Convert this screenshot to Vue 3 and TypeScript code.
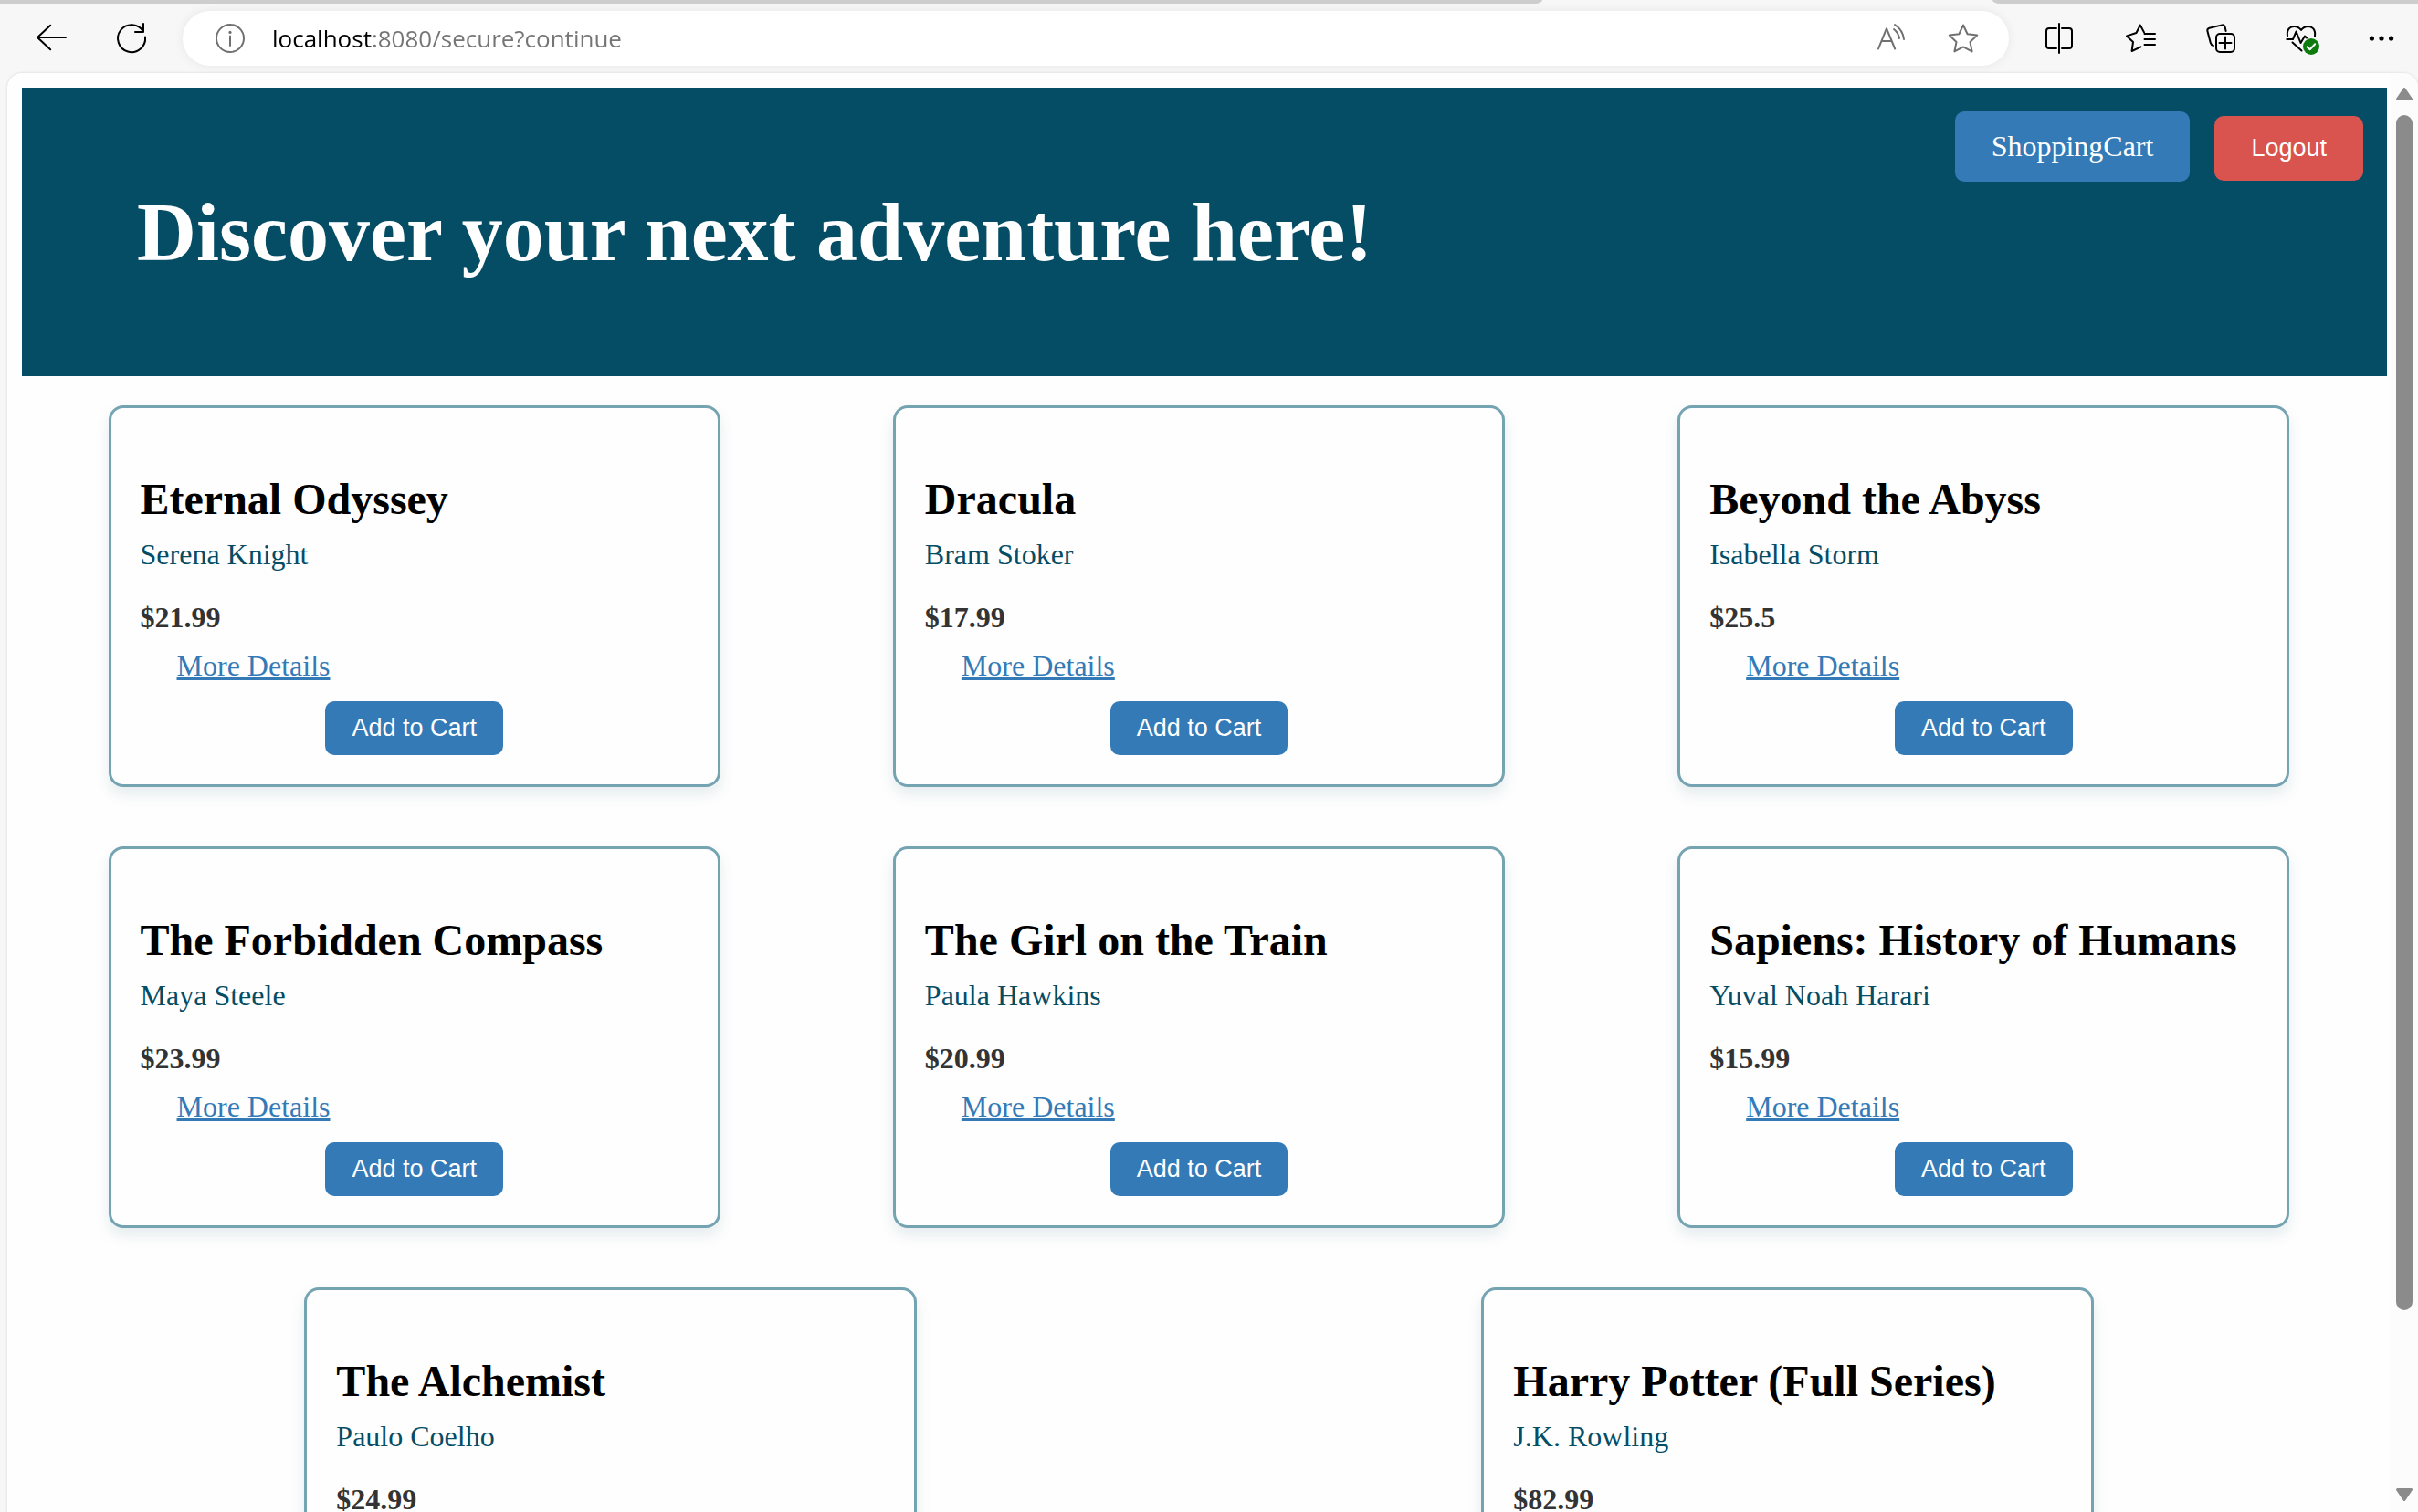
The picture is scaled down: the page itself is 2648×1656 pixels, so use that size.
<script setup lang="ts">
import { ref } from 'vue'

interface Book {
  title: string
  author: string
  price: string
}

const address = ref('localhost:8080/secure?continue')

const books: Book[] = [
  { title: 'Eternal Odyssey', author: 'Serena Knight', price: '$21.99' },
  { title: 'Dracula', author: 'Bram Stoker', price: '$17.99' },
  { title: 'Beyond the Abyss', author: 'Isabella Storm', price: '$25.5' },
  { title: 'The Forbidden Compass', author: 'Maya Steele', price: '$23.99' },
  { title: 'The Girl on the Train', author: 'Paula Hawkins', price: '$20.99' },
  { title: 'Sapiens: History of Humans', author: 'Yuval Noah Harari', price: '$15.99' },
  { title: 'The Alchemist', author: 'Paulo Coelho', price: '$24.99' },
  { title: 'Harry Potter (Full Series)', author: 'J.K. Rowling', price: '$82.99' },
]
</script>

<template>
  <div class="browser">
    <div class="tabs">
      <span class="tab-strip before"></span>
      <span class="tab-strip after"></span>
    </div>

    <div class="toolbar">
      <div class="tools">
        <button class="tool" type="button" aria-label="Back">
          <svg viewBox="0 0 40 40"><path d="M19.2 5.8 5 19 19.2 32.2M5 19H36" /></svg>
        </button>
        <button class="tool" type="button" aria-label="Refresh">
          <svg viewBox="0 0 40 40"><path d="M35 18.5A15 15 0 1 1 33 12.5M33 4V13H24" /></svg>
        </button>
      </div>

      <div class="address">
        <button class="tool muted" type="button" aria-label="Site information">
          <svg viewBox="0 0 40 40">
            <circle cx="20" cy="20" r="15" />
            <path d="M20 17.5V28" />
            <circle class="solid" cx="20" cy="13.4" r="1.6" />
          </svg>
        </button>
        <input v-model="address" class="url" type="text" aria-label="Address" spellcheck="false" />
        <div class="address-tools">
          <button class="tool muted" type="button" aria-label="Read aloud">
            <svg viewBox="0 0 40 40">
              <path d="M5 31.5 14 9.2 23.2 31.5M8.6 23H19.6M22 10Q27 14 28 20M23 5Q32 11 33 21" />
            </svg>
          </button>
          <button class="tool muted" type="button" aria-label="Add to favorites">
            <svg viewBox="0 0 40 40">
              <path d="M20 5.5 24.6 15.2 35.2 16.6 27.5 24 29.6 34.4 20 29.4 10.4 34.4 12.5 24 4.8 16.6 15.4 15.2Z" />
            </svg>
          </button>
        </div>
      </div>

      <div class="tools">
        <button class="tool" type="button" aria-label="Split screen">
          <svg viewBox="0 0 40 40">
            <path d="M19 4V36M16 9H8A3 3 0 0 0 5 12V28A3 3 0 0 0 8 31H16M22 9H30A3 3 0 0 1 33 12V28A3 3 0 0 1 30 31H22" />
          </svg>
        </button>
        <button class="tool" type="button" aria-label="Favorites">
          <svg viewBox="0 0 40 40">
            <path d="M24 13.4 19.8 5.5 15.5 14 5 17.4 12 24 10.6 34 20.5 29.4M24.5 15H36M24.5 21H36M24.5 27H36" />
          </svg>
        </button>
        <button class="tool" type="button" aria-label="Collections">
          <svg viewBox="0 0 40 40">
            <path d="M25.6 12 24.6 7.5Q23.8 5 21.5 5.4L7.5 8.8Q4.8 9.6 5.4 12L8.8 25Q9.5 27.5 12 28" />
            <rect x="15" y="15" width="20" height="20" rx="4" />
            <path d="M25 18.5V31.5M18.5 25H31.5" />
          </svg>
        </button>
        <button class="tool" type="button" aria-label="Browser essentials">
          <svg viewBox="0 0 40 40">
            <path d="M5 17.5C4 10 8 7 12.4 7Q17 7 20 11Q23 7 27.6 7C32 7 36 10 35 17.5" />
            <path d="M4.3 21H11L14.6 12.5 19.5 25 24 17.5 26 19.5M10.5 24.5 20.5 33.5" />
            <circle class="badge" cx="31" cy="29" r="9" />
            <path class="tick" d="M26.6 29.4 29.6 32.2 35.2 26.2" />
          </svg>
        </button>
        <button class="tool" type="button" aria-label="Settings and more">
          <svg viewBox="0 0 40 40">
            <circle class="solid" cx="9.4" cy="20" r="2.6" />
            <circle class="solid" cx="20" cy="20" r="2.6" />
            <circle class="solid" cx="30.6" cy="20" r="2.6" />
          </svg>
        </button>
      </div>
    </div>

    <div class="viewport">
      <div class="page">
        <header class="banner">
          <h1>Discover your next adventure here!</h1>
          <nav class="actions">
            <a class="cart" href="#cart">ShoppingCart</a>
            <button class="logout" type="button">Logout</button>
          </nav>
        </header>

        <main class="books">
          <article v-for="book in books" :key="book.title" class="book">
            <h2>{{ book.title }}</h2>
            <p class="author">{{ book.author }}</p>
            <p class="price">{{ book.price }}</p>
            <a class="details" href="#details">More Details</a>
            <button class="add" type="button">Add to Cart</button>
          </article>
        </main>
      </div>

      <div class="scrollbar">
        <svg class="arrow" viewBox="0 0 18 14"><path d="M9 1.5 16.5 12.5H1.5Z" /></svg>
        <div class="track"><div class="thumb"></div></div>
        <svg class="arrow" viewBox="0 0 18 14"><path d="M9 12.5 16.5 1.5H1.5Z" /></svg>
      </div>
    </div>
  </div>
</template>

<style>
body {
  margin: 0;
  background: #f7f7f7;
}
</style>

<style scoped>
.browser {
  display: flex;
  flex-direction: column;
  height: 100vh;
  overflow: hidden;
  background: #f7f7f7;
  font-family: "Liberation Serif", "Times New Roman", serif;
}

button {
  border: 0;
  font-family: "Liberation Sans", Arial, sans-serif;
  cursor: pointer;
}

.tabs {
  display: flex;
  flex: none;
  justify-content: space-between;
  height: 4px;
}

.tab-strip {
  background: #cdcdcd;
}

.tab-strip.before {
  width: 63.8%;
  border-bottom-right-radius: 8px 4px;
}

.tab-strip.after {
  width: 17.6%;
  border-bottom-left-radius: 8px 4px;
}

.toolbar {
  display: flex;
  flex: none;
  align-items: center;
  gap: 36px;
  padding: 8px 20px 8px 36px;
}

.tools {
  display: flex;
  gap: 48px;
}

.tool {
  width: 40px;
  height: 40px;
  padding: 0;
  background: none;
  color: #000;
}

.tool.muted {
  color: #707070;
}

.tool svg {
  display: block;
  width: 40px;
  height: 40px;
  fill: none;
  stroke: currentColor;
  stroke-width: 2;
  stroke-linecap: round;
  stroke-linejoin: round;
}

.tool .solid {
  fill: currentColor;
  stroke: none;
}

.tool .badge {
  fill: #0f7b0f;
  stroke: none;
}

.tool .tick {
  stroke: #fff;
}

.address {
  display: flex;
  flex: 1;
  align-items: center;
  height: 60px;
  box-sizing: border-box;
  padding: 0 30px 0 32px;
  border-radius: 30px;
  background: #fff;
  box-shadow: 0 0 12px rgba(0, 0, 0, 0.07);
}

.url {
  flex: 1;
  min-width: 0;
  height: 40px;
  padding: 0;
  margin-left: 26px;
  border: 0;
  outline: 0;
  background: linear-gradient(to right, #000 110px, #757575 110px);
  -webkit-background-clip: text;
  background-clip: text;
  color: transparent;
  font-family: "Open Sans", "Noto Sans", sans-serif;
  font-size: 26px;
}

.address-tools {
  display: flex;
  gap: 38px;
}

.viewport {
  display: flex;
  flex: 1;
  min-height: 0;
  margin-left: 8px;
  border-radius: 16px 16px 0 0;
  background: #fefefe;
  box-shadow: 0 0 3px rgba(0, 0, 0, 0.15);
  overflow: hidden;
}

.page {
  flex: 1;
  min-width: 0;
  padding: 16px;
}

.banner {
  display: flex;
  align-items: flex-start;
  justify-content: space-between;
  margin-right: -12px;
  background: #054d65;
  color: #fff;
}

h1 {
  margin: 0;
  padding: 107px 0 105px 126px;
  font-size: 90px;
  line-height: 104px;
}

.actions {
  display: flex;
  align-items: baseline;
  gap: 27px;
  padding: 26px 26px 0 0;
}

.cart {
  padding: 20px 40px;
  border-radius: 10px;
  background: #337ab7;
  color: #fff;
  font-size: 32px;
  line-height: 37px;
  text-decoration: none;
}

.logout {
  padding: 20px 40px;
  border-radius: 10px;
  background: #d9534f;
  color: #fff;
  font-size: 27px;
  line-height: 31px;
}

.books {
  display: flex;
  flex-wrap: wrap;
  justify-content: space-around;
  row-gap: 65px;
  padding: 32px 0;
}

.book {
  display: flex;
  flex-direction: column;
  align-items: flex-start;
  box-sizing: border-box;
  width: 26%;
  padding: 72px 32px 32px;
  border: 3px solid #74a3b1;
  border-radius: 16px;
  background: #fefefe;
  box-shadow: 0 8px 16px rgba(5, 77, 101, 0.1);
}

h2 {
  margin: 0 0 14px;
  color: #000;
  font-size: 48px;
  line-height: 56px;
  white-space: nowrap;
}

.author,
.price,
.details {
  margin: 0;
  font-size: 32px;
  line-height: 37px;
}

.author {
  margin-bottom: 32px;
  color: #054d65;
}

.price {
  margin-bottom: 16px;
  color: #333;
  font-weight: bold;
}

.details {
  margin: 0 40px 20px;
  color: #337ab7;
}

.add {
  align-self: center;
  padding: 14px 29px;
  border-radius: 10px;
  background: #337ab7;
  color: #fff;
  font-size: 27px;
  line-height: 31px;
}

.scrollbar {
  display: flex;
  flex: none;
  flex-direction: column;
  align-items: center;
  gap: 16px;
  width: 30px;
  box-sizing: border-box;
  padding: 16px 0 12px;
  background: #fcfcfc;
}

.arrow {
  flex: none;
  width: 18px;
  height: 14px;
  fill: #8b8b8b;
  stroke: #8b8b8b;
  stroke-width: 3;
  stroke-linejoin: round;
}

.track {
  flex: 1;
  width: 18px;
}

.thumb {
  height: 88%;
  border-radius: 9px;
  background: #8b8b8b;
}
</style>
